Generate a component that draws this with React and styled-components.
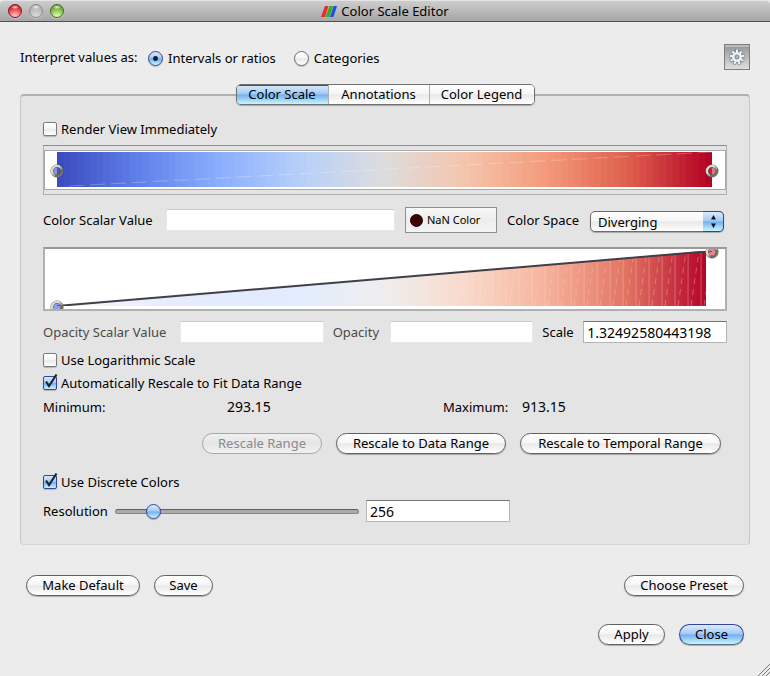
import React, { useState } from "react";
import styled, { createGlobalStyle, css } from "styled-components";

const GlobalStyle = createGlobalStyle`
  *, *::before, *::after { box-sizing: border-box; }
  body { margin: 0; background: #ececec; }
  body, button, input, select {
    font-family: "Noto Sans", "Open Sans", sans-serif;
    font-size: 13px;
    line-height: 18px;
    color: #000;
  }
`;

const gloss = "linear-gradient(#ffffff 0%, #f6f6f6 45%, #e9e9e9 52%, #ffffff 100%)";
const blueGloss = "linear-gradient(#dcebfa 0%, #a5cbf3 45%, #74b1ee 53%, #c9f5ff 100%)";

const Window = styled.main`
  position: relative;
  display: flex;
  flex-direction: column;
  min-height: 100vh;
  background: #ececec;
`;

const TitleBar = styled.header`
  display: grid;
  grid-template-columns: 1fr auto 1fr;
  align-items: center;
  height: 22px;
  padding: 0 8px;
  border-top: 1px solid #e4e4e4;
  border-bottom: 1px solid #515151;
  border-radius: 4px 4px 0 0;
  background: linear-gradient(#cdcdcd, #a6a6a6);
`;

const Lights = styled.div`
  display: flex;
  gap: 7px;
`;

const lightColors = {
  red: ["#d8242f", "#ffb3b3", "#80171c"],
  grey: ["#b4b4b4", "#d6d6d6", "#8b8b8b"],
  green: ["#68a83a", "#d6f59a", "#3f6b25"],
};

const Light = styled.button`
  width: 14px;
  height: 14px;
  padding: 0;
  border: 1px solid ${(p) => lightColors[p.$tone][2]};
  border-radius: 50%;
  background:
    radial-gradient(ellipse 4px 2px at 50% 18%, #ffffffdd, #ffffff00),
    radial-gradient(circle at 50% 100%, ${(p) => lightColors[p.$tone][1]} 15%, ${(p) => lightColors[p.$tone][0]} 75%);
  box-shadow: 0 1px 0 #dcdcdc88;
`;

const Title = styled.h1`
  display: flex;
  align-items: center;
  gap: 4px;
  margin: 0;
  font-size: 13px;
  font-weight: 400;
`;

const Content = styled.div`
  padding: 22px 20px 0;
`;

const ModeRow = styled.div`
  display: flex;
  align-items: center;
  height: 26px;
`;

const ModeLabel = styled.span`
  width: 128px;
  white-space: nowrap;
`;

const RadioLabel = styled.label`
  display: flex;
  align-items: center;
  gap: 5px;
  margin-right: 18px;
  padding-top: 2px;
`;

const Radio = styled.input.attrs({ type: "radio" })`
  appearance: none;
  width: 15px;
  height: 15px;
  margin: 0;
  border: 1px solid #6b6b6b;
  border-radius: 50%;
  background: ${gloss};
  box-shadow: 0 1px 1px #00000033;
  &:checked {
    border-color: #35449b;
    background: radial-gradient(circle, #10203a 0 2px, transparent 3px), ${blueGloss};
  }
`;

const GearButton = styled.button`
  display: grid;
  place-items: center;
  width: 26px;
  height: 26px;
  margin-left: auto;
  padding: 0;
  border: 1px solid #7d7d7d;
  background: linear-gradient(#bcbcbc 0 2px, #9b9b9b 2px, #dedede 100%);
`;

const Tabs = styled.div`
  position: relative;
  z-index: 1;
  display: flex;
  width: max-content;
  height: 21px;
  margin: 14px auto -11px;
  border: 1px solid #6f6f6f;
  border-radius: 5px;
  overflow: hidden;
  box-shadow: 0 1px 1px #00000044;
`;

const Tab = styled.button`
  width: ${(p) => p.$width}px;
  padding: 0;
  border: 0;
  border-left: 1px solid #b0b0b0;
  background: ${gloss};
  line-height: 19px;
  white-space: nowrap;
  &:first-child { border-left: 0; }
  &[aria-selected="true"] {
    background: ${blueGloss};
    box-shadow: inset 0 1px 0 #3c48a8;
  }
`;

const Panel = styled.section`
  display: flex;
  flex-direction: column;
  padding: 21px 22px 22px;
  border: 1px solid #c6c6c6;
  border-top: 2px solid #b0b0b0;
  border-bottom-color: #d6d6d6;
  border-radius: 4px;
  background: #e4e4e4;
`;

const CheckLabel = styled.label`
  display: flex;
  align-items: center;
  gap: 4px;
  width: max-content;
  height: 23px;
`;

const CheckBoxWrap = styled.span`
  position: relative;
  display: flex;
`;

const CheckInput = styled.input.attrs({ type: "checkbox" })`
  appearance: none;
  width: 14px;
  height: 14px;
  margin: 0;
  border: 1px solid #7b7b7b;
  border-radius: 2px;
  background: ${gloss};
  box-shadow: 0 1px 1px #00000033;
  &:checked {
    border-color: #35449b;
    background: ${blueGloss};
  }
  & + svg { display: none; }
  &:checked + svg { display: block; }
`;

const Tick = styled.svg`
  position: absolute;
  left: 0;
  bottom: 0;
  pointer-events: none;
`;

const ScaleFrame = styled.div`
  margin-top: 5px;
  padding: 4px 0;
  border: 1px solid #b0b0b0;
  border-top-color: #8c8c8c;
`;

const ScaleCanvas = styled.div`
  position: relative;
  height: 40px;
  padding: 1px 13px 2px 12px;
  border: 1px solid #a9a9a9;
  background: #fff;
`;

const Drawing = styled.svg`
  display: block;
  width: 100%;
  height: 100%;
`;

const Handle = styled.svg`
  position: absolute;
  width: 14px;
  height: 14px;
  top: ${(p) => p.$top}px;
  ${(p) => (p.$end ? css`right: 6px;` : css`left: 5px;`)}
`;

const ColorRow = styled.div`
  display: grid;
  grid-template-columns: 113px 1fr 92px 73px 134px;
  align-items: center;
  column-gap: 10px;
  height: 26px;
  margin-top: 12px;
  padding-right: 3px;
  white-space: nowrap;
`;

const OpacityRow = styled.div`
  display: grid;
  grid-template-columns: 128px 1fr 48px 1fr 32px 1fr;
  align-items: center;
  column-gap: 9px;
  margin: 10px 0 5px;
  white-space: nowrap;
`;

const FieldLabel = styled.label`
  color: ${(p) => (p.$dim ? "#4a4a4a" : "#000")};
`;

const Field = styled.input`
  width: 100%;
  min-width: 0;
  height: 22px;
  padding: 1px 3px 0;
  border: 1px solid ${(p) => (p.$dim ? "#e8e8e8" : "#b5b5b5")};
  border-top-color: ${(p) => (p.$dim ? "#cccccc" : "#777777")};
  border-radius: 0;
  background: #fff;
  font-size: 14px;
`;

const NanButton = styled.button`
  display: flex;
  align-items: center;
  gap: 4px;
  height: 26px;
  padding: 0 4px;
  border: 1px solid #8e8e8e;
  background: linear-gradient(#f8f8f8, #ededed 50%, #f4f4f4);
  font-size: 11px;
`;

const Swatch = styled.span`
  width: 13px;
  height: 13px;
  border: 1px solid #1c0000;
  border-radius: 50%;
  background: #400000;
`;

const SelectWrap = styled.div`
  position: relative;
  display: flex;
  height: 21px;
  margin-top: 3px;
`;

const Select = styled.select`
  appearance: none;
  width: 100%;
  height: 21px;
  padding: 0 24px 0 7px;
  border: 1px solid #6b6b6b;
  border-radius: 5px;
  background: ${gloss};
  line-height: 18px;
  box-shadow: 0 1px 1px #00000044;
`;

const SelectArrows = styled.span`
  position: absolute;
  top: 0;
  right: 0;
  display: grid;
  place-items: center;
  width: 21px;
  height: 21px;
  border: 1px solid #35449b;
  border-left: 0;
  border-radius: 0 5px 5px 0;
  background: ${blueGloss};
  pointer-events: none;
`;

const OpacityFrame = styled.div`
  position: relative;
  height: 64px;
  margin-top: 14px;
  padding: 2px 13px 3px 12px;
  border: 2px solid #b0b0b0;
  border-top-color: #999999;
  background: #fff;
  overflow: hidden;
`;

const RangeRow = styled.div`
  display: grid;
  grid-template-columns: 184px 216px 79px 1fr;
  align-items: center;
  height: 26px;
`;

const Value = styled.span`
  font-size: 14px;
`;

const ButtonRow = styled.div`
  display: flex;
  gap: 14px;
  justify-content: ${(p) => (p.$end ? "flex-end" : "flex-start")};
  padding: 0 6px;
  margin-top: ${(p) => p.$top}px;
  margin-bottom: ${(p) => p.$bottom || 0}px;
`;

const Pill = styled.button`
  width: ${(p) => p.$width}px;
  height: 21px;
  padding: 0;
  border: 1px solid ${(p) => (p.$primary ? "#35449b" : "#606060")};
  ${(p) => p.$primary && css`border-bottom-color: #5c6c80;`}
  border-radius: 11px;
  background: ${(p) => (p.$primary ? blueGloss : gloss)};
  line-height: 19px;
  white-space: nowrap;
  box-shadow: 0 1px 1px #00000044;
  &:disabled {
    border-color: #a8a8a8;
    background: linear-gradient(#f0f0f0, #e6e6e6 50%, #f1f1f1);
    box-shadow: none;
    color: #8a8a8a;
  }
`;

const Spacer = styled.span`
  flex: 1;
`;

const ResolutionRow = styled.div`
  display: grid;
  grid-template-columns: 65px 244px 144px;
  align-items: center;
  column-gap: 7px;
  margin-top: 7px;
`;

const Slider = styled.input.attrs({ type: "range" })`
  appearance: none;
  width: 100%;
  height: 16px;
  margin: 0;
  background: transparent;
  &::-webkit-slider-runnable-track {
    height: 5px;
    border: 1px solid #858585;
    border-top-color: #625d59;
    border-radius: 3px;
    background: #aaaaaa;
  }
  &::-webkit-slider-thumb {
    appearance: none;
    width: 15px;
    height: 15px;
    margin-top: -6px;
    border: 1px solid #35449b;
    border-radius: 50%;
    background: ${blueGloss};
    box-shadow: 0 1px 1px #00000044;
  }
`;

const Grip = styled.svg`
  position: absolute;
  right: 0;
  bottom: 0;
`;

const coolWarm = [
  [59, 76, 192], [98, 130, 234], [141, 176, 254], [184, 208, 249], [221, 221, 221],
  [245, 196, 173], [244, 154, 123], [222, 96, 77], [180, 4, 38],
];

const colorAt = (t) => {
  const pos = Math.min(t, 0.9999) * (coolWarm.length - 1);
  const i = Math.floor(pos);
  return coolWarm[i].map((c, k) => c + (coolWarm[i + 1][k] - c) * (pos - i));
};
const rgb = (c) => `rgb(${c.map(Math.round).join(",")})`;

const BANDS = 100;

function ColorBands() {
  return (
    <Drawing viewBox="0 0 655 36" preserveAspectRatio="none" aria-hidden="true">
      {Array.from({ length: BANDS }, (_, i) => (
        <rect
          key={i}
          x={(i * 655) / BANDS}
          y="0"
          width={655 / BANDS + 1}
          height="36"
          fill={rgb(colorAt(i / (BANDS - 1)))}
        />
      ))}
      <path d="M12 35 655 0" stroke="#fff" strokeOpacity=".25" strokeWidth="1" strokeDasharray="15 6" />
    </Drawing>
  );
}

function OpacityRamp() {
  return (
    <Drawing viewBox="0 0 655 55" preserveAspectRatio="none" aria-hidden="true">
      <defs>
        <linearGradient id="ramp" gradientUnits="userSpaceOnUse" x1="0" y1="0" x2="649" y2="0">
          {Array.from({ length: 17 }, (_, i) => {
            const t = i / 16;
            return <stop key={i} offset={t} stopColor={rgb(colorAt(t).map((c) => 255 + (c - 255) * t))} />;
          })}
        </linearGradient>
        <linearGradient id="fade" gradientUnits="userSpaceOnUse" x1="390" y1="0" x2="649" y2="0">
          <stop offset="0" stopColor="#fff" stopOpacity="0.1" />
          <stop offset="1" stopColor="#fff" stopOpacity="0.3" />
        </linearGradient>
        <clipPath id="under"><path d="M0 55 649 0V55Z" /></clipPath>
      </defs>
      <path d="M0 55 649 0V55Z" fill="url(#ramp)" />
      <g clipPath="url(#under)" stroke="url(#fade)" strokeWidth="1">
        {Array.from({ length: 20 }, (_, i) => {
          const x = 397 + i * 13;
          return (
            <React.Fragment key={i}>
              <path d={`M${x} 55 ${x + 0.1} 0`} />
              <path d={`M${x + 3} 55 ${x + 11} 0`} strokeDasharray="6 5" />
            </React.Fragment>
          );
        })}
      </g>
      <path d="M0 55 655 0" fill="none" stroke="#403e48" strokeWidth="2" />
    </Drawing>
  );
}

function Knob({ color, end, top }) {
  return (
    <Handle $end={end} $top={top} viewBox="0 0 14 14" aria-hidden="true">
      <circle cx="7" cy="7" r="4" fill={color} fillOpacity=".65" />
      <circle cx="7" cy="7" r="5" fill="none" stroke="#55554c" strokeWidth="3" />
      <circle cx="7" cy="7" r="5" fill="none" stroke="#b5b5a8" strokeWidth="2" />
      <path d="M3 10A5 5 0 0 1 10 3" fill="none" stroke="#dcdccf" strokeWidth="2" />
      <path d="M11.500 5A5 5 0 0 1 5 11.500" fill="none" stroke="#6b6b5e" strokeWidth="2" />
    </Handle>
  );
}

function CheckBox({ children, defaultChecked }) {
  return (
    <CheckLabel>
      <CheckBoxWrap>
        <CheckInput defaultChecked={defaultChecked} />
        <Tick width="16" height="17" viewBox="0 0 16 17" aria-hidden="true">
          <path d="M3 8.500 6 13 13.500 1.500" fill="none" stroke="#1d2633" strokeWidth="2.200" />
        </Tick>
      </CheckBoxWrap>
      {children}
    </CheckLabel>
  );
}

const TEETH = [0, 40, 80, 120, 160, 200, 240, 280, 320];

function Gear() {
  return (
    <svg width="18" height="18" viewBox="0 0 18 18" aria-hidden="true">
      <g stroke="#777f88" strokeWidth="3.500">
        {TEETH.map((a) => (
          <path key={a} d="M9 5V1" transform={`rotate(${a} 9 9)`} />
        ))}
      </g>
      <circle cx="9" cy="9" r="5.500" fill="#777f88" />
      <g stroke="#eef4f9" strokeWidth="2">
        {TEETH.map((a) => (
          <path key={a} d="M9 5V1.500" transform={`rotate(${a} 9 9)`} />
        ))}
      </g>
      <circle cx="9" cy="9" r="5" fill="#e8eff5" />
      <circle cx="9" cy="9" r="2" fill="#b4b4b4" stroke="#7d858c" />
    </svg>
  );
}

const tabs = [
  { name: "Color Scale", width: 91 },
  { name: "Annotations", width: 101 },
  { name: "Color Legend", width: 105 },
];

export default function App() {
  const [tab, setTab] = useState("Color Scale");
  return (
    <Window>
      <GlobalStyle />
      <TitleBar>
        <Lights>
          <Light $tone="red" aria-label="Close window" />
          <Light $tone="grey" aria-label="Minimize" />
          <Light $tone="green" aria-label="Zoom" />
        </Lights>
        <Title>
          <svg width="16" height="11" viewBox="0 0 16 11" aria-hidden="true">
            <path d="M4 0H7.500L4 11H0Z" fill="#ee2730" />
            <path d="M8.500 0H12L8.500 11H4.500Z" fill="#2fae26" />
            <path d="M12.500 0H16L12.500 11H9Z" fill="#2450d6" />
          </svg>
          Color Scale Editor
        </Title>
      </TitleBar>
      <Content>
        <ModeRow role="radiogroup" aria-label="Interpret values as">
          <ModeLabel>Interpret values as:</ModeLabel>
          <RadioLabel><Radio name="mode" defaultChecked />Intervals or ratios</RadioLabel>
          <RadioLabel><Radio name="mode" />Categories</RadioLabel>
          <GearButton aria-label="Settings"><Gear /></GearButton>
        </ModeRow>
        <Tabs role="tablist">
          {tabs.map((t) => (
            <Tab key={t.name} role="tab" $width={t.width} aria-selected={tab === t.name} onClick={() => setTab(t.name)}>
              {t.name}
            </Tab>
          ))}
        </Tabs>
        <Panel>
          <CheckBox>Render View Immediately</CheckBox>
          <ScaleFrame>
            <ScaleCanvas>
              <ColorBands />
              <Knob color="#4a5cc8" top={13} />
              <Knob color="#c8304c" top={13} end />
            </ScaleCanvas>
          </ScaleFrame>
          <ColorRow>
            <FieldLabel htmlFor="scalar">Color Scalar Value</FieldLabel>
            <Field id="scalar" $dim />
            <NanButton><Swatch />NaN Color</NanButton>
            <FieldLabel htmlFor="space">Color Space</FieldLabel>
            <SelectWrap>
              <Select id="space" defaultValue="Diverging">
                <option>Diverging</option>
              </Select>
              <SelectArrows>
                <svg width="7" height="13" viewBox="0 0 7 13" aria-hidden="true">
                  <path d="M3.500 0 6 4.500H1ZM3.500 13 6 8.500H1Z" fill="#0c1520" />
                </svg>
              </SelectArrows>
            </SelectWrap>
          </ColorRow>
          <OpacityFrame>
            <OpacityRamp />
            <Knob color="#5668e0" top={51} />
            <Knob color="#d8405c" top={-4} end />
          </OpacityFrame>
          <OpacityRow>
            <FieldLabel $dim htmlFor="opacity-scalar">Opacity Scalar Value</FieldLabel>
            <Field id="opacity-scalar" $dim />
            <FieldLabel $dim htmlFor="opacity">Opacity</FieldLabel>
            <Field id="opacity" $dim />
            <FieldLabel htmlFor="scale">Scale</FieldLabel>
            <Field id="scale" defaultValue="1.32492580443198" />
          </OpacityRow>
          <CheckBox>Use Logarithmic Scale</CheckBox>
          <CheckBox defaultChecked>Automatically Rescale to Fit Data Range</CheckBox>
          <RangeRow>
            <span>Minimum:</span>
            <Value>293.15</Value>
            <span>Maximum:</span>
            <Value>913.15</Value>
          </RangeRow>
          <ButtonRow $end $top={13} $bottom={16}>
            <Pill $width={120} disabled>Rescale Range</Pill>
            <Pill $width={170}>Rescale to Data Range</Pill>
            <Pill $width={201}>Rescale to Temporal Range</Pill>
          </ButtonRow>
          <CheckBox defaultChecked>Use Discrete Colors</CheckBox>
          <ResolutionRow>
            <FieldLabel htmlFor="resolution">Resolution</FieldLabel>
            <Slider aria-label="Resolution" min="1" max="1910" defaultValue="256" />
            <Field id="resolution" defaultValue="256" />
          </ResolutionRow>
        </Panel>
        <ButtonRow $top={30}>
          <Pill $width={114}>Make Default</Pill>
          <Pill $width={59}>Save</Pill>
          <Spacer />
          <Pill $width={120}>Choose Preset</Pill>
        </ButtonRow>
        <ButtonRow $end $top={28} $bottom={30}>
          <Pill $width={67}>Apply</Pill>
          <Pill $width={65} $primary>Close</Pill>
        </ButtonRow>
      </Content>
      <Grip width="13" height="13" viewBox="0 0 13 13" aria-hidden="true">
        <path d="M1 13 13 1M5 13 13 5M9 13 13 9" stroke="#7a7a7a" />
      </Grip>
    </Window>
  );
}
